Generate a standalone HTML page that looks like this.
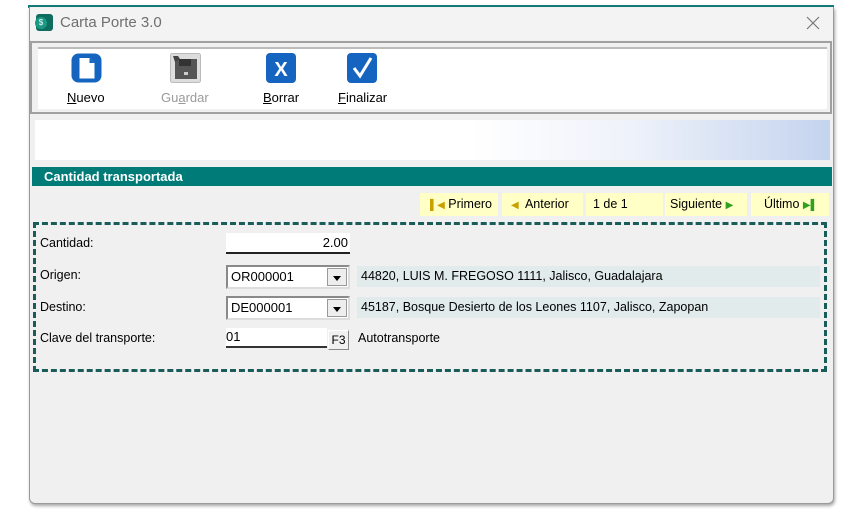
<!DOCTYPE html>
<html><head><meta charset="utf-8"><style>
*{margin:0;padding:0;box-sizing:border-box}
body{width:843px;height:513px;background:#fff;position:relative;overflow:hidden;font-family:"Liberation Sans",Arial,sans-serif;font-size:12px;color:#000}
.a{position:absolute}
.win{left:29px;top:7px;width:805px;height:497px;background:#f0f0f0;border:1px solid #9a9a9a;border-top:none;border-radius:0 0 6px 6px;box-shadow:1px 2px 3px rgba(0,0,0,.35)}
.lbl{font-size:12.5px}
.nav{top:193px;height:23px;background:#ffffc6;font-size:12.5px;line-height:23px}
.g{font-size:10px}
.addr{left:357px;width:463px;height:21px;background:#e1ebeb;line-height:21px;padding-left:4px;font-size:12.5px}
.combo{left:226px;width:124px;height:24px;background:#fff;border:2px solid #8a8a8a;border-right-color:#ddd;border-bottom-color:#ddd;font-size:13px;line-height:20px;padding-left:3px}
.dd{position:absolute;right:1px;top:1px;width:20px;height:18px;background:#eee;border:1px solid #999}
.dd:after{content:"";position:absolute;left:5px;top:7px;border:4px solid transparent;border-top:5px solid #000}
</style></head><body>
<div class="a" style="left:28px;top:5px;width:806px;height:3px;background:#137c76"></div>
<div class="a win"></div>
<div class="a" style="left:30px;top:8px;width:803px;height:32px;background:#f3f3f3"></div>
<div class="a" style="left:36px;top:14px;width:17px;height:17px;border-radius:3px;background:#0f6d5f"></div>
<div class="a" style="left:35px;top:17px;width:12px;height:12px;border-radius:50%;background:#1a9a85;color:#fff;font-size:8px;text-align:center;line-height:12px">$</div>
<div class="a" style="left:60px;top:14px;font-size:15px;color:#6f6f6f">Carta Porte 3.0</div>
<svg class="a" style="left:806px;top:16px" width="14" height="14"><path d="M1 1L13 13M13 1L1 13" stroke="#777" stroke-width="1.2"/></svg>
<div class="a" style="left:30px;top:41px;width:802px;height:73px;border:2px solid #a0a0a0;background:#f0f0f0"></div>
<div class="a" style="left:38px;top:47px;width:789px;height:62px;background:#fff;border-top:2px solid #bbb"></div>
<svg class="a" style="left:70px;top:52px" width="33" height="32"><rect x="1.5" y="1.5" width="30" height="29" rx="7" fill="#1565c0"/><path d="M9.5 6h10l5 5v15.5h-15z" fill="#fff"/><path d="M19.5 6v5h5" fill="#1565c0"/></svg>
<div class="a" style="left:67px;top:90px;font-size:13px"><u>N</u>uevo</div>
<svg class="a" style="left:170px;top:53px" width="32" height="31"><rect x="0.5" y="0.5" width="30" height="29" rx="2" fill="#ddd" stroke="#bbb"/><rect x="5" y="6" width="22" height="20" fill="#555"/><rect x="9" y="6" width="12" height="7" fill="#333"/><rect x="14" y="19" width="4" height="3" fill="#ccc"/><path d="M3 3l5 0 2 3-5 3z" fill="#444"/></svg>
<div class="a" style="left:161px;top:90px;font-size:13px;color:#9a9a9a">Gu<u>a</u>rdar</div>
<svg class="a" style="left:265px;top:52px" width="32" height="32"><rect x="1" y="1" width="30" height="30" rx="4" fill="#1565c0"/><text x="16" y="24" text-anchor="middle" fill="#fff" font-family="Liberation Sans" font-weight="bold" font-size="20">X</text></svg>
<div class="a" style="left:263px;top:90px;font-size:13px"><u>B</u>orrar</div>
<svg class="a" style="left:346px;top:52px" width="32" height="32"><rect x="1" y="1" width="30" height="30" rx="4" fill="#1565c0"/><path d="M8 16l6 8L25 6" fill="none" stroke="#fff" stroke-width="3"/></svg>
<div class="a" style="left:338px;top:90px;font-size:13px"><u>F</u>inalizar</div>
<div class="a" style="left:35px;top:120px;width:795px;height:40px;background:linear-gradient(90deg,#fff 0%,#fff 55%,#eef2fa 75%,#c4d4ee 100%)"></div>
<div class="a" style="left:32px;top:167px;width:800px;height:19px;background:#007b78;color:#fff;font-weight:bold;font-size:13px;line-height:19px;padding-left:12px">Cantidad transportada</div>
<div class="a nav" style="left:420px;width:78px;padding-left:10px"><span class="g" style="color:#c8a000">▌◀</span> Primero</div>
<div class="a nav" style="left:502px;width:81px;padding-left:9px"><span class="g" style="color:#c8a000">◀</span>&nbsp; Anterior</div>
<div class="a nav" style="left:586px;width:77px;padding-left:7px">1 de 1</div>
<div class="a nav" style="left:665px;width:82px;padding-left:5px">Siguiente <span class="g" style="color:#30a020">▶</span></div>
<div class="a nav" style="left:751px;width:78px;padding-left:13px">Último <span class="g" style="color:#30a020">▶▌</span></div>
<div class="a" style="left:33px;top:222px;width:794px;height:150px;border:3px dashed #1a5c5a"></div>
<div class="a lbl" style="left:40px;top:236px">Cantidad:</div>
<div class="a" style="left:226px;top:233px;width:124px;height:21px;background:#fff;border-bottom:2px solid #222;text-align:right;font-size:13px;line-height:20px;padding-right:2px">2.00</div>
<div class="a lbl" style="left:40px;top:268px">Origen:</div>
<div class="a combo" style="top:265px">OR000001<div class="dd"></div></div>
<div class="a addr" style="top:266px">44820, LUIS M. FREGOSO 1111, Jalisco, Guadalajara</div>
<div class="a lbl" style="left:40px;top:300px">Destino:</div>
<div class="a combo" style="top:296px">DE000001<div class="dd"></div></div>
<div class="a addr" style="top:297px">45187, Bosque Desierto de los Leones 1107, Jalisco, Zapopan</div>
<div class="a lbl" style="left:40px;top:331px">Clave del transporte:</div>
<div class="a" style="left:226px;top:328px;width:101px;height:20px;background:#fff;border-bottom:2px solid #333;line-height:18px;font-size:13px">01</div>
<div class="a" style="left:328px;top:330px;width:21px;height:20px;background:#f0f0f0;border:1px solid #888;border-top-color:#fff;border-left-color:#fff;font-size:12px;line-height:19px;text-align:center">F3</div>
<div class="a lbl" style="left:358px;top:331px">Autotransporte</div>
</body></html>
